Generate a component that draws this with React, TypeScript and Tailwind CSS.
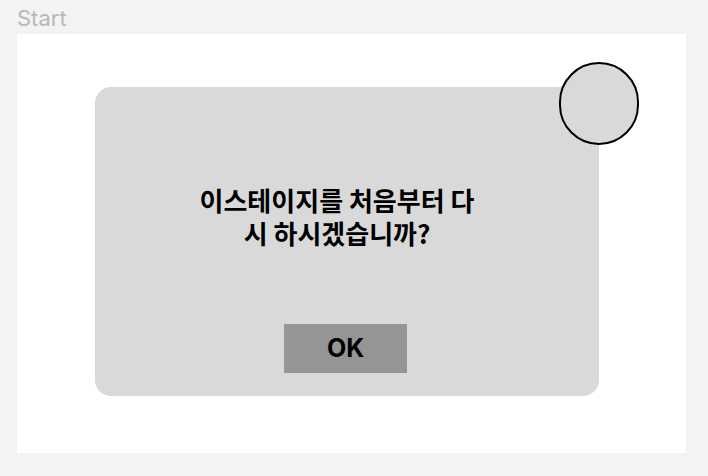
import React from "react";

const App = () => {
  return (
    <div className="w-[708px] h-[476px] bg-[#f3f3f3] px-[17px] pt-[6px] font-['Inter','Noto_Sans_CJK_KR',sans-serif]">
      <div className="h-[28px] text-[22px] leading-[24px] text-[#b8b8b8]">Start</div>
      <div className="w-[669px] h-[419px] bg-white pt-[53px] pl-[78px]">
        <div className="relative w-[504px] h-[309px] rounded-[16px] bg-[#d9d9d9] flex flex-col items-center">
          <div className="absolute -top-[25px] -right-[40px] w-[80px] h-[83px] rounded-full border-2 border-black bg-[#d9d9d9]" />
          <p className="mt-[96px] -ml-[20px] w-[298px] break-all text-center text-[26px] leading-[33px] font-bold text-black font-['Noto_Sans_CJK_KR',sans-serif]">
            이스테이지를 처음부터 다시 하시겠습니까?
          </p>
          <button className="mt-auto mb-[23px] -ml-[3px] w-[123px] h-[49px] bg-[#959595] text-[25px] font-bold text-black flex items-center justify-center">
            OK
          </button>
        </div>
      </div>
    </div>
  );
};

export default App;
